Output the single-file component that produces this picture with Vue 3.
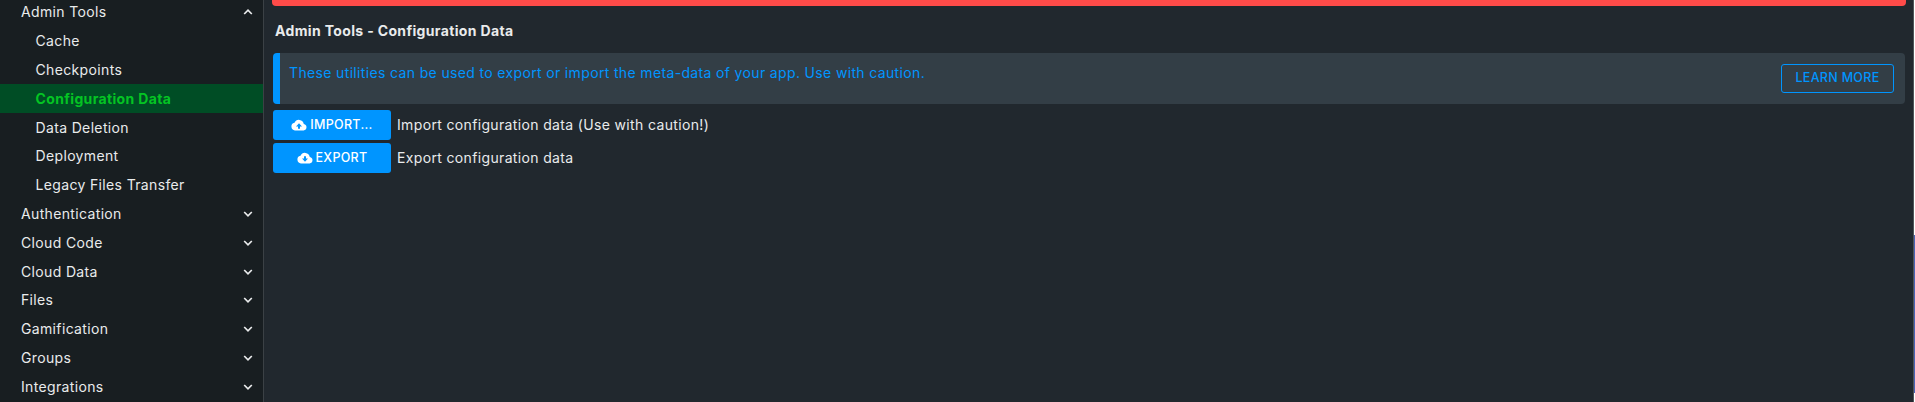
<script setup>
const items = [
  { label: 'Admin Tools', chevron: 'up' },
  { label: 'Cache', child: true },
  { label: 'Checkpoints', child: true },
  { label: 'Configuration Data', child: true, active: true },
  { label: 'Data Deletion', child: true },
  { label: 'Deployment', child: true },
  { label: 'Legacy Files Transfer', child: true },
  { label: 'Authentication', chevron: 'down' },
  { label: 'Cloud Code', chevron: 'down' },
  { label: 'Cloud Data', chevron: 'down' },
  { label: 'Files', chevron: 'down' },
  { label: 'Gamification', chevron: 'down' },
  { label: 'Groups', chevron: 'down' },
  { label: 'Integrations', chevron: 'down' },
]
const actions = [
  {
    label: 'IMPORT...',
    text: 'Import configuration data (Use with caution!)',
    arrow: 'M8 6.2 5 9.4h2v2.4h2V9.4h2z',
  },
  {
    label: 'EXPORT',
    text: 'Export configuration data',
    arrow: 'M8 11.8 5 8.6h2V6.2h2v2.4h2z',
  },
]
</script>

<template>
  <div class="app">
    <nav class="sidebar">
      <a
        v-for="item in items"
        :key="item.label"
        class="item"
        :class="{ child: item.child, active: item.active }"
      >
        <span>{{ item.label }}</span>
        <svg v-if="item.chevron" class="chevron" :class="item.chevron" viewBox="0 0 10 6">
          <path d="M1.2 1 5 4.8 8.8 1" />
        </svg>
      </a>
    </nav>
    <main class="content">
      <div class="alert"></div>
      <h1 class="title">Admin Tools - Configuration Data</h1>
      <section class="info">
        <p class="info-text">These utilities can be used to export or import the meta-data of your app. Use with caution.</p>
        <button class="learn">LEARN MORE</button>
      </section>
      <div v-for="action in actions" :key="action.label" class="action">
        <button class="primary">
          <svg class="cloud" viewBox="0 0 16 16">
            <path class="cloud-shape" d="M4 13.5a3.9 3.9 0 0 1-.5-7.7A4.9 4.9 0 0 1 12.8 6.9 3.35 3.35 0 0 1 12.6 13.5z" />
            <path class="cloud-arrow" :d="action.arrow" />
          </svg>
          <span>{{ action.label }}</span>
        </button>
        <span class="action-text">{{ action.text }}</span>
      </div>
    </main>
    <div class="scrollbar"><div class="thumb"></div></div>
  </div>
</template>

<style>
body {
  margin: 0;
  background: #21282e;
}
</style>

<style scoped>
.app {
  display: flex;
  height: 402px;
  overflow: hidden;
  background: #21282e;
  color: #e9ebec;
  font: 14px/20px Inter, sans-serif;
  letter-spacing: 0.35px;
}
.sidebar {
  box-sizing: border-box;
  flex: none;
  width: 264px;
  background: #181e21;
  border-right: 1px solid #3b4145;
  margin-top: -2px;
}
.item {
  box-sizing: border-box;
  display: flex;
  align-items: center;
  justify-content: space-between;
  height: 28.8px;
  padding: 0 10px 0 21px;
}
.child {
  padding-left: 35.5px;
}
.active {
  background: #004d25;
  color: #04c423;
  font-weight: 700;
}
.chevron {
  width: 10px;
  height: 6px;
  fill: none;
  stroke: #e9ebec;
  stroke-width: 1.7;
}
.up {
  transform: rotate(180deg);
}
.content {
  flex: 1;
  min-width: 0;
  padding: 0 8px;
}
.alert {
  height: 6px;
  background: #ff4b49;
  border-radius: 0 0 4px 4px;
  margin-right: -1px;
}
.title {
  margin: 15px 3px 12px;
  font-size: 14px;
  line-height: 20px;
  font-weight: 700;
}
.info {
  box-sizing: border-box;
  display: flex;
  justify-content: space-between;
  align-items: flex-start;
  height: 51px;
  margin: 0 0 6px 1px;
  padding: 11px 11px 0 9px;
  border-left: 7px solid #0095ff;
  border-radius: 4px;
  background: #333e46;
}
.info-text {
  margin: -1px 0 0;
  color: #0095ff;
}
button {
  box-sizing: border-box;
  font: 500 12.5px/16px Inter, sans-serif;
  letter-spacing: 0.3px;
  border-radius: 3px;
  padding: 0;
}
.learn {
  width: 113px;
  height: 29px;
  padding-bottom: 2px;
  border: 1px solid #0095ff;
  background: none;
  color: #0095ff;
}
.action {
  display: flex;
  align-items: center;
  height: 30px;
  margin: 0 0 3px 1px;
}
.primary {
  display: flex;
  align-items: center;
  justify-content: center;
  gap: 3px;
  width: 118px;
  height: 30px;
  border: 0;
  background: #0095ff;
  color: #fff;
}
.cloud {
  width: 16px;
  height: 16px;
}
.cloud-shape {
  fill: #fff;
}
.cloud-arrow {
  fill: #0095ff;
}
.action-text {
  margin-left: 6px;
}
.scrollbar {
  flex: none;
  width: 1px;
  height: 402px;
  background: #fff;
  border-left: 1px solid #50565a;
}
.thumb {
  height: 158px;
  margin-top: 235px;
  background: #4a62b5;
}
</style>
